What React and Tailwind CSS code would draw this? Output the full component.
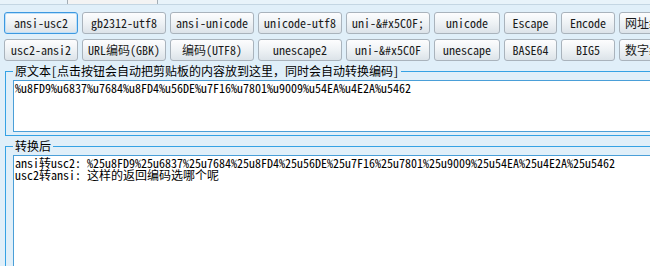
import React from 'react';

const row1 = [
  { label: 'ansi-usc2', w: 'w-[74px]', focus: true },
  { label: 'gb2312-utf8', w: 'w-[84px]' },
  { label: 'ansi-unicode', w: 'w-[84px]' },
  { label: 'unicode-utf8', w: 'w-[84px]' },
  { label: 'uni-&#x5C0F;', w: 'w-[84px]' },
  { label: 'unicode', w: 'w-[66px]' },
  { label: 'Escape', w: 'w-[53px]' },
  { label: 'Encode', w: 'w-[54px]' },
  { label: '网址编码', w: 'w-[60px]' },
];

const row2 = [
  { label: 'usc2-ansi2', w: 'w-[74px]' },
  { label: 'URL编码(GBK)', w: 'w-[84px]' },
  { label: '编码(UTF8)', w: 'w-[84px]' },
  { label: 'unescape2', w: 'w-[84px]' },
  { label: 'uni-&#x5C0F', w: 'w-[84px]' },
  { label: 'unescape', w: 'w-[66px]' },
  { label: 'BASE64', w: 'w-[53px]' },
  { label: 'BIG5', w: 'w-[54px]' },
  { label: '数字编码', w: 'w-[60px]' },
];

const Btn = ({ label, w, focus }) => (
  <button
    className={`${w} h-[22px] shrink-0 overflow-hidden whitespace-nowrap rounded-[3px] border bg-gradient-to-b from-[#fdfdfe] via-[#eef2f5] to-[#dce3e9] text-[12px] leading-[20px] text-[#1a1a1a] ${
      focus ? 'border-[#3c98e0] shadow-[inset_0_0_0_1px_#bfe0f8]' : 'border-[#a9b3bc]'
    }`}
  >
    {label}
  </button>
);

const Box = ({ title, h, children }) => (
  <fieldset className="ml-[5px] mt-[2px] w-[720px] border border-[#35a2e4] pl-[7px] pt-[1px] pb-[3px]">
    <legend className="px-[2px] text-[12px] leading-[16px] text-black">{title}</legend>
    <div className={`${h} border border-[#4a9fd8] bg-white px-[1px] pt-[1px] text-[12px] leading-[12px] text-black whitespace-nowrap`}>
      {children}
    </div>
  </fieldset>
);

const App = () => {
  return (
    <div className="w-[650px] h-[266px] overflow-hidden bg-[#e0eff9] font-[family-name:'Noto_Sans_Mono_CJK_SC','Noto_Sans_CJK_SC',monospace]">
      <div className="h-[5px] border-b border-[#c4d6e3] bg-[#e8f3fa]">
        <div className="ml-[67px] w-[91px] h-[4px] border-x border-[#a3adb5] bg-[#f3f3f3]" />
      </div>

      <div className="flex gap-[4px] pl-[4px] pt-[7px]">
        {row1.map((b) => (
          <Btn key={b.label} {...b} />
        ))}
      </div>
      <div className="flex gap-[4px] pl-[4px] mt-[5px]">
        {row2.map((b) => (
          <Btn key={b.label} {...b} />
        ))}
      </div>

      <Box title="原文本[点击按钮会自动把剪贴板的内容放到这里，同时会自动转换编码]" h="h-[52px]">
        <div>%u8FD9%u6837%u7684%u8FD4%u56DE%u7F16%u7801%u9009%u54EA%u4E2A%u5462</div>
      </Box>

      <Box title="转换后" h="h-[200px]">
        <div>ansi转usc2: %25u8FD9%25u6837%25u7684%25u8FD4%25u56DE%25u7F16%25u7801%25u9009%25u54EA%25u4E2A%25u5462</div>
        <div>usc2转ansi: 这样的返回编码选哪个呢</div>
      </Box>
    </div>
  );
};

export default App;
